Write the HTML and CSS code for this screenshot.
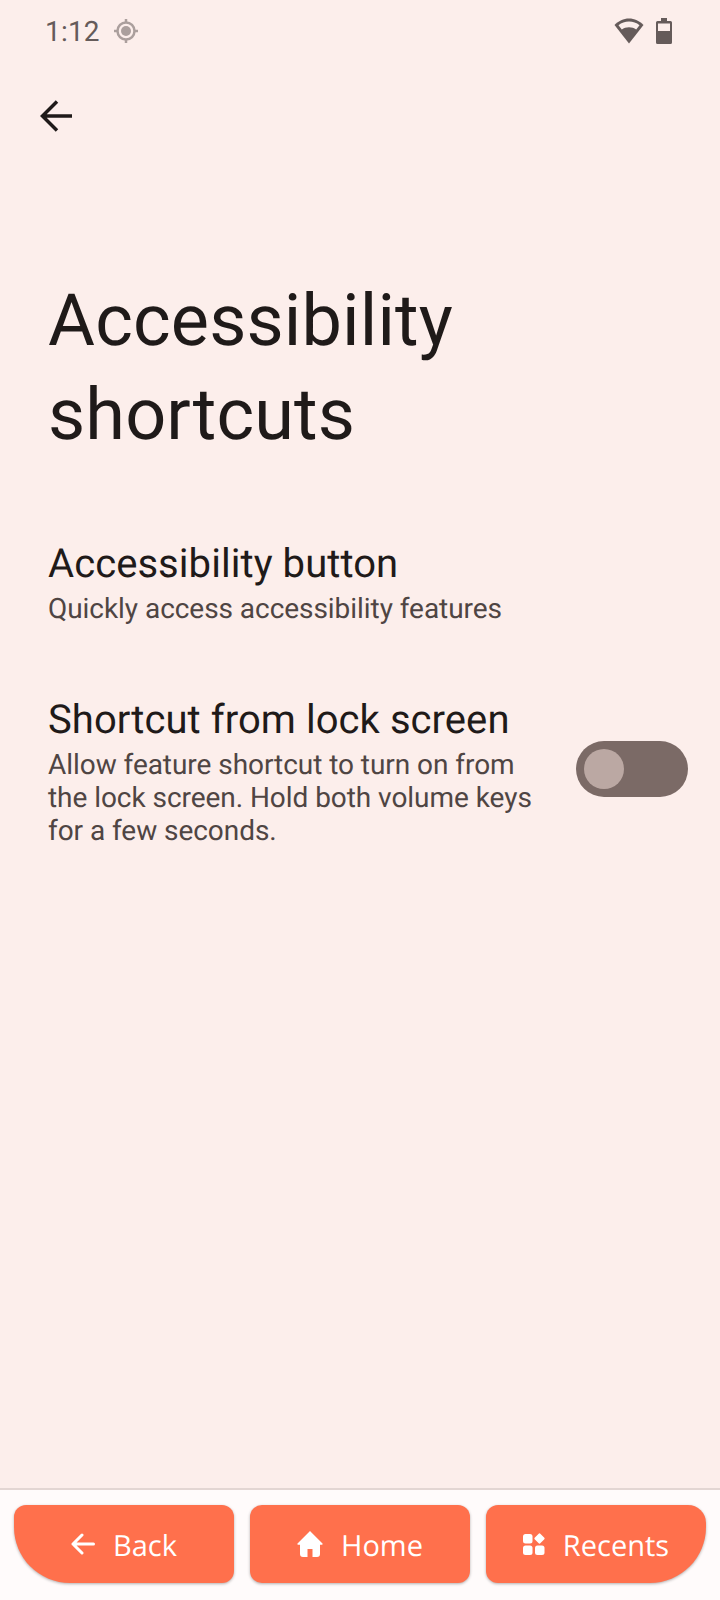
FILE: index.html
```html
<!DOCTYPE html>
<html lang="en">
<head>
  <meta charset="UTF-8">
  <meta name="viewport" content="width=device-width, initial-scale=1.0">
  <title>Accessibility shortcuts</title>
  <link rel="stylesheet" href="styles.css">
</head>
<body>
  <div class="status-bar">
    <div class="status-left">
      <span class="clock">1:12</span>
      <svg class="gps-icon" width="24" height="24" viewBox="0 0 24 24">
        <circle cx="12" cy="12" r="8.500" fill="none" stroke="#ab9f9d" stroke-width="2.500"/>
        <circle cx="12" cy="12" r="5" fill="#ab9f9d"/>
        <path d="M12 0V4M12 20v4M0 12H4M20 12h4" stroke="#ab9f9d" stroke-width="2.500"/>
      </svg>
    </div>
    <div class="status-right">
      <svg width="30" height="26" viewBox="0 0 30 26">
        <path d="M15 25.500 0.500 7C4.500 3 9.500 0.500 15 0.500S25.500 3 29.500 7z" fill="#655b5a"/>
        <path d="M4.500 7.200C7.500 4.800 11 3.500 15 3.500s7.500 1.300 10.500 3.700l-3.300 4.200C20.200 10 17.800 9.200 15 9.200s-5.200.8-7.200 2.200z" fill="#fceeeb"/>
      </svg>
      <svg width="16" height="26" viewBox="0 0 16 26">
        <path d="M5 0h6v3h3.500A1.500 1.500 0 0 1 16 4.500V24.500a1.500 1.500 0 0 1-1.500 1.500H1.500A1.500 1.500 0 0 1 0 24.500V4.500A1.500 1.500 0 0 1 1.500 3H5z" fill="#655b5a"/>
        <rect x="2" y="5.500" width="12" height="7.500" fill="#fceeeb"/>
      </svg>
    </div>
  </div>

  <div class="toolbar">
    <svg width="32" height="32" viewBox="0 0 32 32">
      <path d="M32 16H3M17 1.500 2.500 16 17 30.500" fill="none" stroke="#1f1a19" stroke-width="3.500"/>
    </svg>
  </div>

  <h1 class="page-title">Accessibility shortcuts</h1>

  <div class="settings">
    <div class="setting-row">
      <div class="setting-text">
        <div class="setting-title">Accessibility button</div>
        <div class="setting-summary">Quickly access accessibility features</div>
      </div>
    </div>
    <div class="setting-row">
      <div class="setting-text">
        <div class="setting-title">Shortcut from lock screen</div>
        <div class="setting-summary">Allow feature shortcut to turn on from the lock screen. Hold both volume keys for a few seconds.</div>
      </div>
      <div class="switch"><div class="switch-thumb"></div></div>
    </div>
  </div>

  <div class="nav-bar">
    <div class="nav-btn nav-back">
      <svg width="24" height="22" viewBox="0 0 24 22">
        <path d="M22.500 11H2M11 2l-9 9 9 9" fill="none" stroke="#fff" stroke-width="3" stroke-linecap="round" stroke-linejoin="round"/>
      </svg>
      <span>Back</span>
    </div>
    <div class="nav-btn">
      <svg width="26" height="26" viewBox="0 0 26 26">
        <path d="M13 0 .500 12.500a.8.800 0 0 0 .5 1.300H3V23a3 3 0 0 0 3 3h4.500v-8h5v8H20a3 3 0 0 0 3-3V13.800h2a.8.800 0 0 0 .5-1.300z" fill="#fff"/>
      </svg>
      <span>Home</span>
    </div>
    <div class="nav-btn nav-recents">
      <svg width="22" height="22" viewBox="0 0 22 22">
        <rect x="0" y="1" width="9.500" height="9.500" rx="2.500" fill="#fff"/>
        <rect x="0" y="12.500" width="9.500" height="9.500" rx="2.500" fill="#fff"/>
        <rect x="12" y="12.500" width="9.500" height="9.500" rx="2.500" fill="#fff"/>
        <rect x="12.500" y="1.500" width="8" height="8" rx="1.500" fill="#fff" transform="rotate(45 16.500 5.500)"/>
      </svg>
      <span>Recents</span>
    </div>
  </div>
</body>
</html>
```

FILE: styles.css
```css
* {
  box-sizing: border-box;
}

body {
  margin: 0;
  width: 720px;
  height: 1600px;
  background-color: #fceeeb;
  font-family: Roboto, sans-serif;
  text-rendering: geometricPrecision;
  color: #1f1a19;
  display: flex;
  flex-direction: column;
}

.status-bar {
  height: 60px;
  padding: 2px 48px 0 45px;
  display: flex;
  justify-content: space-between;
  align-items: center;
}

.status-left {
  display: flex;
  align-items: center;
  gap: 14px;
}

.clock {
  font-size: 28px;
  letter-spacing: 0.2px;
  color: #655b5a;
}

.status-right {
  display: flex;
  align-items: center;
  gap: 12px;
}

.toolbar {
  height: 56px;
  margin-top: 28px;
  padding-left: 40px;
  display: flex;
  align-items: center;
}

.page-title {
  margin: 130px 0 0;
  padding: 0 200px 0 48px;
  font-size: 72px;
  font-weight: 400;
  letter-spacing: 0.16px;
  line-height: 94px;
}

.settings {
  margin-top: 74px;
  flex: 1;
}

.setting-row {
  padding: 0 32px 0 48px;
  display: flex;
  align-items: center;
  margin-bottom: 67px;
}

.setting-text {
  flex: 1;
}

.setting-title {
  font-size: 40px;
  letter-spacing: 0.06px;
  line-height: 56px;
}

.setting-summary {
  width: 490px;
  font-size: 28px;
  letter-spacing: -0.05px;
  line-height: 33px;
  color: #4f4543;
}

.switch {
  width: 112px;
  height: 56px;
  margin-bottom: 2px;
  border-radius: 28px;
  background-color: #7b6a66;
  padding: 8px;
}

.switch-thumb {
  width: 40px;
  height: 40px;
  border-radius: 50%;
  background-color: #bba8a3;
}

.nav-bar {
  height: 112px;
  border-top: 2px solid #e3d6d3;
  background-color: #fffbfb;
  padding: 15px 14px 0;
  display: flex;
  gap: 16px;
}

.nav-btn {
  flex: 1;
  height: 78px;
  border-radius: 12px;
  background-color: #ff704c;
  box-shadow: 0 1px 3px rgba(0, 0, 0, 0.3);
  color: #fff;
  font-family: "Open Sans", sans-serif;
  font-size: 29px;
  font-weight: 500;
  display: flex;
  align-items: center;
  justify-content: center;
  gap: 18px;
}

.nav-btn span {
  padding-top: 2px;
}

.nav-back {
  border-bottom-left-radius: 56px;
}

.nav-recents {
  border-top-right-radius: 18px;
  border-bottom-right-radius: 56px;
}
```
